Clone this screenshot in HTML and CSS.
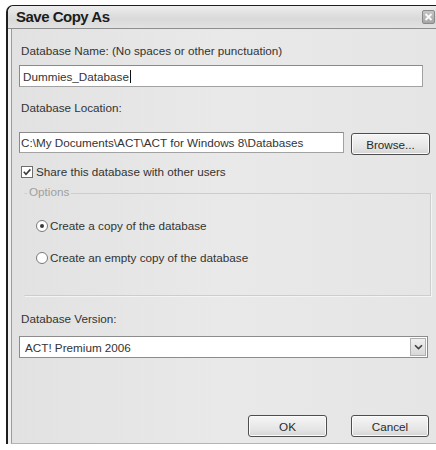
FILE: index.html
```html
<!DOCTYPE html>
<html>
<head>
<meta charset="utf-8">
<title>Save Copy As</title>
<link rel="stylesheet" href="styles.css">
</head>
<body>
<div class="window">
  <div class="titlebar">
    <span class="title">Save Copy As</span>
    <span class="close">
      <svg width="11" height="12" viewBox="0 0 11 12"><path d="M2.5 3 L8.5 9 M8.5 3 L2.5 9" stroke="#fafafa" stroke-width="1.8" fill="none"/></svg>
    </span>
  </div>
  <div class="frame">
    <div class="panel">
      <div class="label">Database Name: (No spaces or other punctuation)</div>
      <div class="field field-name">Dummies_Database<span class="caret"></span></div>

      <div class="label label-loc">Database Location:</div>
      <div class="loc-row">
        <div class="field field-loc">C:\My Documents\ACT\ACT for Windows 8\Databases</div>
        <div class="btn btn-browse">Browse...</div>
      </div>

      <div class="check-row">
        <span class="checkbox">
          <svg width="10" height="10" viewBox="0 0 10 10"><path d="M1.8 4.8 L4 7.2 L8.4 2.4" stroke="#3a3a3a" stroke-width="1.6" fill="none"/></svg>
        </span>
        <span>Share this database with other users</span>
      </div>

      <div class="group">
        <span class="legend">Options</span>
        <div class="radio-row radio-first">
          <span class="radio on"><span class="dot"></span></span>
          <span>Create a copy of the database</span>
        </div>
        <div class="radio-row radio-second">
          <span class="radio"></span>
          <span>Create an empty copy of the database</span>
        </div>
      </div>

      <div class="label label-ver">Database Version:</div>
      <div class="combo">
        <span class="combo-text">ACT! Premium 2006</span>
        <span class="drop">
          <svg width="9" height="6" viewBox="0 0 9 6"><path d="M1 1.2 L4.5 4.6 L8 1.2" stroke="#404040" stroke-width="1.6" fill="none"/></svg>
        </span>
      </div>

      <div class="actions">
        <div class="btn btn-ok">OK</div>
        <div class="btn btn-cancel">Cancel</div>
      </div>
    </div>
  </div>
</div>
</body>
</html>
```
FILE: styles.css
```css
html, body {
  margin: 0;
  height: 450px;
  overflow: hidden;
  background: #ffffff;
}

body {
  font-family: "Liberation Sans", Arial, sans-serif;
  font-size: 11.7px;
  color: #333333;
}

/* dialog window */
.window {
  margin: 5px 0 0 6px;
  width: 430px;
  box-sizing: border-box;
  border-left: 2px solid #1e1e1e;
  border-top: 1px solid #1e1e1e;
  border-top-left-radius: 7px;
  background: #f1f1f1;
}

.titlebar {
  display: flex;
  align-items: center;
  height: 22px;
  padding-left: 8px;
  border-bottom: 1px solid #8e8e8e;
  border-top-left-radius: 6px;
  background: linear-gradient(#ececec, #d9d9d9 60%, #e2e2e2);
}

.title {
  font-weight: bold;
  font-size: 15px;
  letter-spacing: -0.5px;
  color: #1c1c1c;
  line-height: 22px;
}

.close {
  margin-left: auto;
  margin-right: 1px;
  width: 13px;
  height: 14px;
  box-sizing: border-box;
  border: 1px solid #8a8a8a;
  border-radius: 2px;
  background: linear-gradient(#c4c4c4, #a6a6a6);
  display: flex;
  align-items: center;
  justify-content: center;
}

/* client area */
.frame {
  padding-left: 3px;
}

.panel {
  border-left: 1px solid #9c9c9c;
  border-bottom: 1px solid #b4b4b4;
  background: linear-gradient(90deg, #e2e2e2, #e9e9e9 50%, #e5e5e5);
  padding: 0 0 6px 7px;
  overflow: hidden;
}

.label {
  margin-top: 15px;
  padding-left: 2px;
  line-height: 14px;
  height: 14px;
  white-space: nowrap;
}

.label-loc { margin-top: 14px; }
.label-ver { margin-top: 16px; }

.field {
  box-sizing: border-box;
  background: #ffffff;
  border: 1px solid #a2a2a2;
  border-top-color: #8a8a8a;
  border-left-color: #8a8a8a;
  white-space: nowrap;
  display: flex;
  align-items: center;
}

.field-name {
  margin-top: 7px;
  width: 404px;
  height: 22px;
  padding-left: 3px;
}

.caret {
  display: inline-block;
  width: 1px;
  height: 13px;
  margin-left: 1px;
  background: #111111;
}

.loc-row {
  margin-top: 17px;
  display: flex;
  align-items: flex-start;
}

.field-loc {
  width: 325px;
  height: 21px;
  padding-left: 1px;
}

.btn {
  box-sizing: border-box;
  height: 22px;
  border: 1px solid #4e4e4e;
  border-radius: 3px;
  background: linear-gradient(#f6f6f6, #e4e4e4 70%, #d4d4d4);
  box-shadow: inset 0 0 0 1px #fbfbfb;
  display: flex;
  align-items: center;
  justify-content: center;
  color: #2a2a2a;
}

.btn-browse {
  margin-left: 7px;
  margin-top: 1px;
  width: 79px;
}

.check-row {
  margin-top: 10px;
  padding-left: 2px;
  display: flex;
  align-items: center;
  gap: 3px;
  line-height: 14px;
  white-space: nowrap;
}

.checkbox {
  box-sizing: border-box;
  width: 12px;
  height: 12px;
  border: 1px solid #6e6e6e;
  background: #ffffff;
  display: flex;
  align-items: center;
  justify-content: center;
}

/* options group */
.group {
  margin-top: 14px;
  margin-left: 5px;
  width: 407px;
  height: 103px;
  box-sizing: border-box;
  border: 1px solid #cdcdcd;
  border-left-color: #e2e2e2;
  box-shadow: 1px 1px 0 #f4f4f4;
}

.legend {
  display: block;
  width: fit-content;
  margin: -9px 0 0 2px;
  padding: 0 2px;
  line-height: 14px;
  height: 14px;
  color: #a0a0a0;
  background: #e3e3e3;
}

.radio-row {
  display: flex;
  align-items: center;
  gap: 2px;
  padding-left: 11px;
  line-height: 14px;
  white-space: nowrap;
}

.radio-first { margin-top: 20px; }
.radio-second { margin-top: 18px; }

.radio {
  box-sizing: border-box;
  width: 12px;
  height: 12px;
  border-radius: 50%;
  border: 1px solid #7a7a7a;
  background: #ffffff;
  display: flex;
  align-items: center;
  justify-content: center;
}

.dot {
  width: 4px;
  height: 4px;
  border-radius: 50%;
  background: #3a3a3a;
}

/* version combo */
.combo {
  margin-top: 10px;
  box-sizing: border-box;
  width: 409px;
  height: 22px;
  border: 1px solid #8c8c8c;
  background: #ffffff;
  display: flex;
  align-items: center;
}

.combo-text {
  padding-left: 5px;
  flex: 1;
}

.drop {
  box-sizing: border-box;
  width: 16px;
  height: 18px;
  margin-right: 1px;
  border: 1px solid #b0b0b0;
  background: linear-gradient(#f0f0f0, #d8d8d8);
  display: flex;
  align-items: center;
  justify-content: center;
}

.actions {
  margin-top: 57px;
  width: 410px;
  display: flex;
  justify-content: flex-end;
  gap: 24px;
}

.btn-ok { width: 79px; }
.btn-cancel { width: 78px; }
```
